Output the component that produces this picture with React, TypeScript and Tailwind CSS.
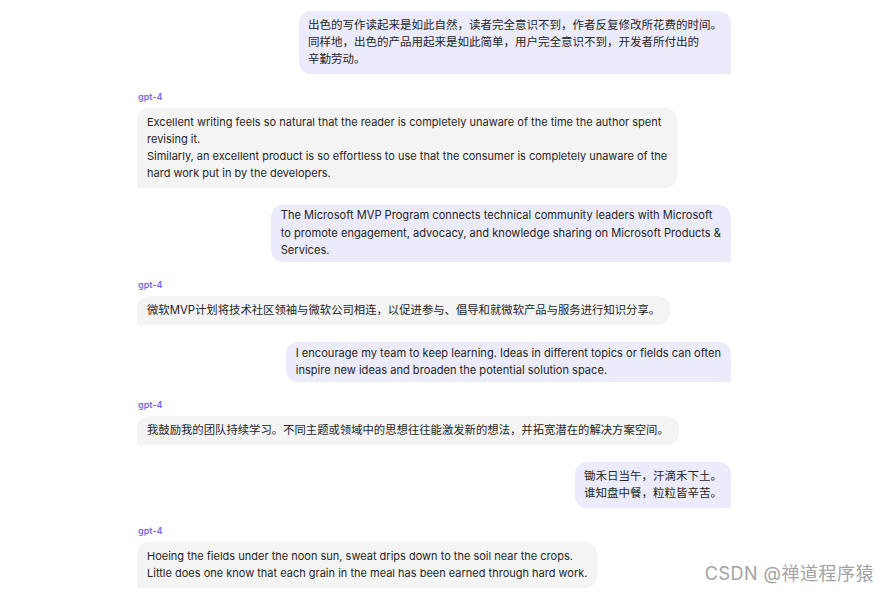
import React from "react";

type Msg = { role: "user" | "assistant"; zh?: boolean; text: string };

const messages: Msg[] = [
  {
    role: "user",
    zh: true,
    text: "出色的写作读起来是如此自然，读者完全意识不到，作者反复修改所花费的时间。\n同样地，出色的产品用起来是如此简单，用户完全意识不到，开发者所付出的\n辛勤劳动。",
  },
  {
    role: "assistant",
    text: "Excellent writing feels so natural that the reader is completely unaware of the time the author spent\nrevising it.\nSimilarly, an excellent product is so effortless to use that the consumer is completely unaware of the\nhard work put in by the developers.",
  },
  {
    role: "user",
    text: "The Microsoft MVP Program connects technical community leaders with Microsoft\nto promote engagement, advocacy, and knowledge sharing on Microsoft Products &\nServices.",
  },
  {
    role: "assistant",
    zh: true,
    text: "微软MVP计划将技术社区领袖与微软公司相连，以促进参与、倡导和就微软产品与服务进行知识分享。",
  },
  {
    role: "user",
    text: "I encourage my team to keep learning. Ideas in different topics or fields can often\ninspire new ideas and broaden the potential solution space.",
  },
  {
    role: "assistant",
    zh: true,
    text: "我鼓励我的团队持续学习。不同主题或领域中的思想往往能激发新的想法，并拓宽潜在的解决方案空间。",
  },
  {
    role: "user",
    zh: true,
    text: "锄禾日当午，汗滴禾下土。\n谁知盘中餐，粒粒皆辛苦。",
  },
  {
    role: "assistant",
    text: "Hoeing the fields under the noon sun, sweat drips down to the soil near the crops.\nLittle does one know that each grain in the meal has been earned through hard work.",
  },
];

const font = { fontFamily: 'Inter, "Noto Sans CJK SC", sans-serif' };

export default function App() {
  return (
    <main
      className="w-[890px] h-[595px] bg-white overflow-hidden relative"
      style={font}
    >
      <div className="w-[594px] ml-[137px] pt-[11px] flex flex-col">
        {messages.map((m, i) =>
          m.role === "user" ? (
            <div key={i} className={`flex justify-end ${i > 0 ? "mt-[17px]" : ""}`}>
              <div
                className={`bg-[#ebebfc] rounded-[12px] rounded-br-none text-[#262626] whitespace-pre ${
                  m.zh
                    ? "px-[9px] py-[5.5px] text-[11.5px] leading-[17.3px]"
                    : "px-[10px] py-[2.5px] text-[11.1px] leading-[17.5px]"
                }`}
              >
                {m.text}
              </div>
            </div>
          ) : (
            <div key={i} className="flex flex-col items-start mt-[17px]">
              <div className="text-[9px] leading-[12px] font-semibold text-[#7468f2] pl-[1px] mb-[5px]">
                gpt-4
              </div>
              <div
                className={`bg-[#f4f4f4] rounded-[12px] rounded-bl-none px-[10px] py-[6px] text-[#262626] whitespace-pre leading-[17px] ${
                  m.zh ? "text-[11.35px]" : "text-[11px]"
                }`}
              >
                {m.text}
              </div>
            </div>
          )
        )}
      </div>
      <div className="absolute right-[16px] bottom-[8px] text-[18px] tracking-[0.5px] text-[#a3a3a3]">
        CSDN @禅道程序猿
      </div>
    </main>
  );
}
